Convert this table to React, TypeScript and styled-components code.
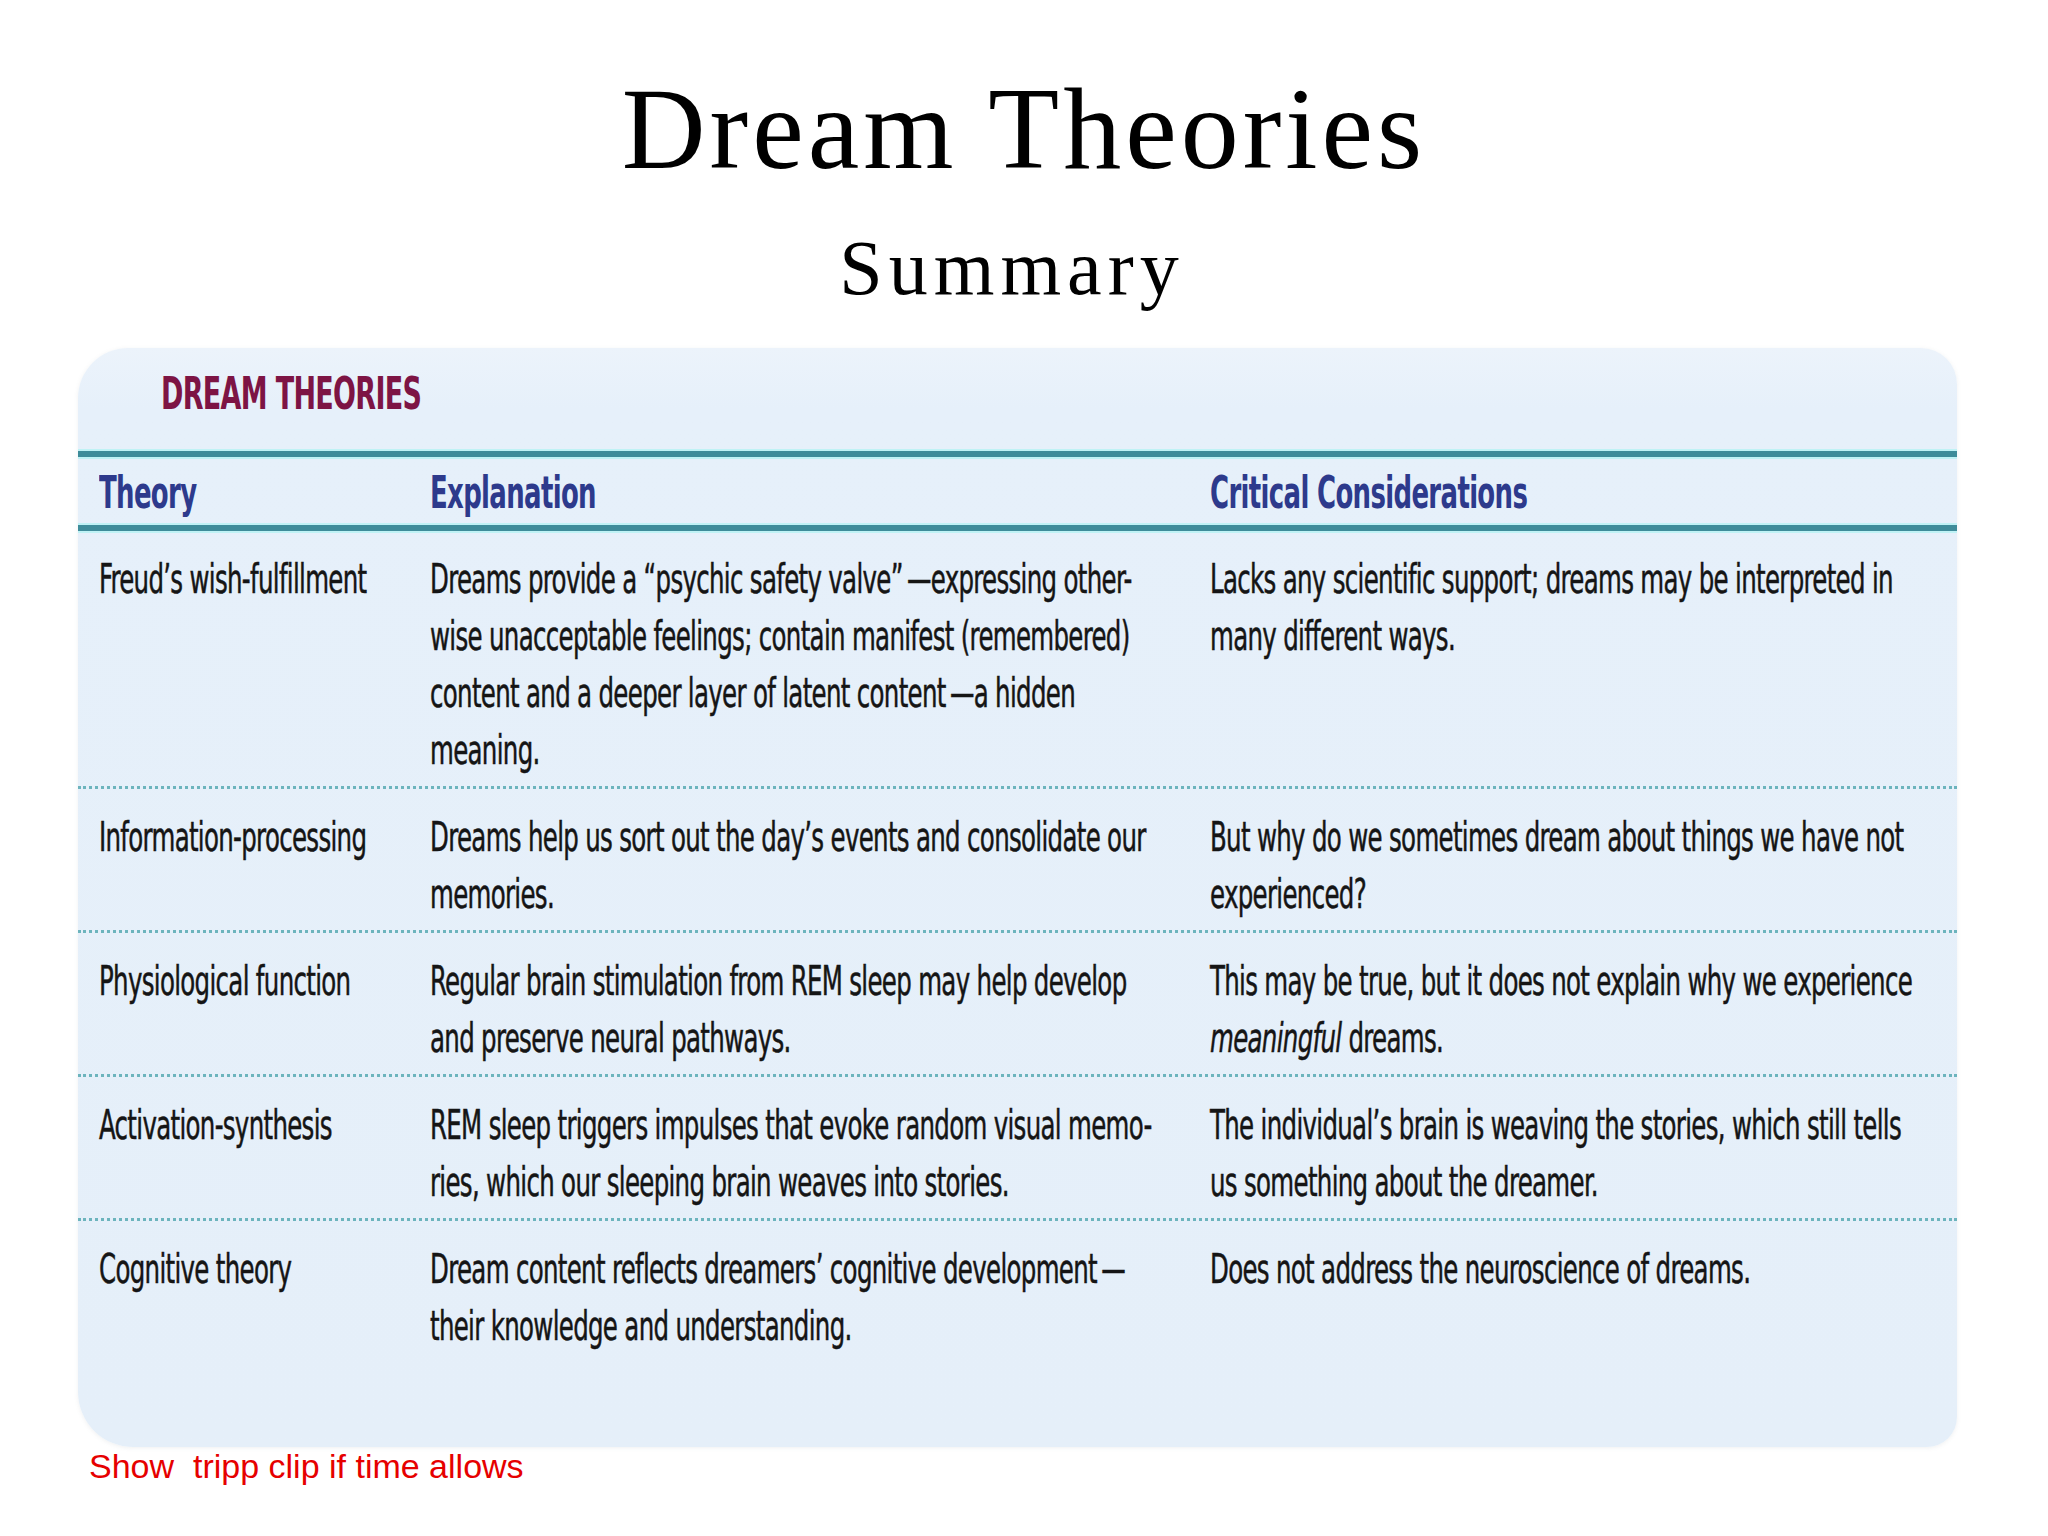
import React from "react";
import styled, { createGlobalStyle, css } from "styled-components";

const GlobalStyle = createGlobalStyle`
  html, body {
    margin: 0;
    padding: 0;
    background: #ffffff;
  }
  body {
    font-family: "Liberation Sans", Arial, sans-serif;
  }
`;

// the slide uses a very narrow face; DejaVu Sans Condensed squeezed sideways comes closest
const condensed = (scale: number) => css`
  font-family: "DejaVu Sans Condensed", "DejaVu Sans", sans-serif;
  white-space: nowrap;
  transform: scaleX(${scale});
  transform-origin: 0 0;
`;

const Page = styled.div`
  width: 2048px;
  height: 1536px;
  box-sizing: border-box;
  padding-top: 71px;
  display: flex;
  flex-direction: column;
  overflow: hidden;
`;

const Title = styled.h1`
  margin: 0;
  font-family: "Liberation Serif", "Times New Roman", serif;
  font-weight: normal;
  font-size: 116px;
  line-height: 116px;
  letter-spacing: 4px;
  text-align: center;
  color: #000;
`;

const Subtitle = styled.h2`
  margin: 42px 0 0;
  padding-right: 24px;
  font-family: "Liberation Serif", "Times New Roman", serif;
  font-weight: normal;
  font-size: 78px;
  line-height: 78px;
  letter-spacing: 6px;
  text-align: center;
  color: #000;
`;

const Card = styled.section`
  margin: 41px 0 0 78px;
  width: 1879px;
  height: 1099px;
  box-sizing: border-box;
  padding-top: 26px;
  background: linear-gradient(#ecf3fb 0px, #e6f0fa 60px, #e5eff9 100%);
  border-radius: 50px 36px 30px 55px;
  box-shadow: 0 1px 4px rgba(120, 130, 140, 0.12);
  overflow: hidden;
`;

const CaptionBar = styled.div`
  padding-left: 83px;
`;

const Caption = styled.div`
  ${condensed(0.666)}
  font-weight: bold;
  font-size: 45px;
  line-height: 40px;
  letter-spacing: -1px;
  color: #7d1444;
`;

const Table = styled.div`
  margin-top: 37px;
`;

const Grid = styled.div`
  display: grid;
  grid-template-columns: 331px 780px 1fr;
  padding-left: 21px;
`;

const HeaderRow = styled(Grid)`
  border-top: 6px solid #3e8c9a;
  border-bottom: 6px solid #3e8c9a;
  padding-top: 3px;
  box-shadow: 0 -2px 0 #bff2f5, 0 2px 0 #bff2f5, inset 0 2px 0 #bff2f5,
    inset 0 -2px 0 #bff2f5;
`;

const HeadCell = styled.div`
  ${condensed(0.656)}
  font-weight: bold;
  font-size: 44px;
  line-height: 65px;
  letter-spacing: -1px;
  color: #2d3a8c;
`;

const Row = styled(Grid)`
  padding-top: 20px;
  padding-bottom: 7px;

  & + & {
    border-top: 3px dotted #6cb4bd;
  }
`;

const Cell = styled.div`
  ${condensed(0.68)}
  font-size: 40px;
  line-height: 57px;
  letter-spacing: -1px;
  color: #151515;
  -webkit-text-stroke: 0.5px #151515;
`;

const Line = styled.span`
  display: block;
`;

const Note = styled.div`
  margin-left: 89px;
  font-family: "Liberation Sans", Arial, sans-serif;
  font-size: 34px;
  line-height: 39px;
  white-space: pre;
  color: #e60000;
`;

type Entry = {
  theory: string;
  explanation: React.ReactNode[];
  critical: React.ReactNode[];
};

const rows: Entry[] = [
  {
    theory: "Freud’s wish-fulfillment",
    explanation: [
      "Dreams provide a “psychic safety valve”\u2009—expressing other-",
      "wise unacceptable feelings; contain manifest (remembered)",
      "content and a deeper layer of latent content\u2009—a hidden",
      "meaning.",
    ],
    critical: [
      "Lacks any scientific support; dreams may be interpreted in",
      "many different ways.",
    ],
  },
  {
    theory: "Information-processing",
    explanation: [
      "Dreams help us sort out the day’s events and consolidate our",
      "memories.",
    ],
    critical: [
      "But why do we sometimes dream about things we have not",
      "experienced?",
    ],
  },
  {
    theory: "Physiological function",
    explanation: [
      "Regular brain stimulation from REM sleep may help develop",
      "and preserve neural pathways.",
    ],
    critical: [
      "This may be true, but it does not explain why we experience",
      <>
        <i>meaningful</i> dreams.
      </>,
    ],
  },
  {
    theory: "Activation-synthesis",
    explanation: [
      "REM sleep triggers impulses that evoke random visual memo-",
      "ries, which our sleeping brain weaves into stories.",
    ],
    critical: [
      "The individual’s brain is weaving the stories, which still tells",
      "us something about the dreamer.",
    ],
  },
  {
    theory: "Cognitive theory",
    explanation: [
      "Dream content reflects dreamers’ cognitive development\u2009—",
      "their knowledge and understanding.",
    ],
    critical: ["Does not address the neuroscience of dreams."],
  },
];

const App = () => {
  return (
    <Page>
      <GlobalStyle />
      <Title>Dream Theories</Title>
      <Subtitle>Summary</Subtitle>
      <Card>
        <CaptionBar>
          <Caption>DREAM THEORIES</Caption>
        </CaptionBar>
        <Table>
          <HeaderRow>
            <HeadCell>Theory</HeadCell>
            <HeadCell>Explanation</HeadCell>
            <HeadCell>Critical Considerations</HeadCell>
          </HeaderRow>
          {rows.map((row) => (
            <Row key={row.theory}>
              <Cell>
                <Line>{row.theory}</Line>
              </Cell>
              <Cell>
                {row.explanation.map((text, i) => (
                  <Line key={i}>{text}</Line>
                ))}
              </Cell>
              <Cell>
                {row.critical.map((text, i) => (
                  <Line key={i}>{text}</Line>
                ))}
              </Cell>
            </Row>
          ))}
        </Table>
      </Card>
      <Note>{"Show  tripp clip if time allows"}</Note>
    </Page>
  );
};

export default App;
